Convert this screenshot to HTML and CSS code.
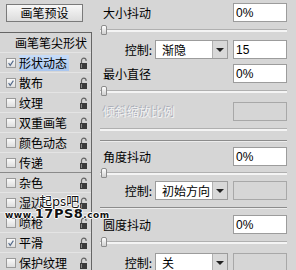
FILE: index.html
```html
<!DOCTYPE html>
<html>
<head>
<meta charset="utf-8">
<link rel="stylesheet" href="styles.css">
</head>
<body>
<div class="app">
  <div class="left">
    <div class="preset-btn">画笔预设</div>
    <div class="list">
      <div class="row header">画笔笔尖形状</div>
      <div class="row"><span class="cb on"><svg width="10" height="10" viewBox="0 0 10 10"><path d="M2 5l2 3 4-6" fill="none" stroke="#556a8a" stroke-width="1.4"/></svg></span><span class="name sel">形状动态</span><span class="lock"><svg width="10" height="12" viewBox="0 0 10 12"><path d="M2.5 6V3.5a2.3 2.3 0 0 1 4.6 0V4" fill="none" stroke="#666" stroke-width="1.2"/><rect x="1" y="6" width="7" height="6" fill="#3c3c3c"/><rect x="2" y="7" width="1" height="4" fill="#888"/></svg></span></div>
      <div class="row"><span class="cb on"><svg width="10" height="10" viewBox="0 0 10 10"><path d="M2 5l2 3 4-6" fill="none" stroke="#556a8a" stroke-width="1.4"/></svg></span><span class="name">散布</span><span class="lock"><svg width="10" height="12" viewBox="0 0 10 12"><path d="M2.5 6V3.5a2.3 2.3 0 0 1 4.6 0V4" fill="none" stroke="#666" stroke-width="1.2"/><rect x="1" y="6" width="7" height="6" fill="#3c3c3c"/><rect x="2" y="7" width="1" height="4" fill="#888"/></svg></span></div>
      <div class="row"><span class="cb"></span><span class="name">纹理</span><span class="lock"><svg width="10" height="12" viewBox="0 0 10 12"><path d="M2.5 6V3.5a2.3 2.3 0 0 1 4.6 0V4" fill="none" stroke="#666" stroke-width="1.2"/><rect x="1" y="6" width="7" height="6" fill="#3c3c3c"/><rect x="2" y="7" width="1" height="4" fill="#888"/></svg></span></div>
      <div class="row"><span class="cb"></span><span class="name">双重画笔</span><span class="lock"><svg width="10" height="12" viewBox="0 0 10 12"><path d="M2.5 6V3.5a2.3 2.3 0 0 1 4.6 0V4" fill="none" stroke="#666" stroke-width="1.2"/><rect x="1" y="6" width="7" height="6" fill="#3c3c3c"/><rect x="2" y="7" width="1" height="4" fill="#888"/></svg></span></div>
      <div class="row"><span class="cb"></span><span class="name">颜色动态</span><span class="lock"><svg width="10" height="12" viewBox="0 0 10 12"><path d="M2.5 6V3.5a2.3 2.3 0 0 1 4.6 0V4" fill="none" stroke="#666" stroke-width="1.2"/><rect x="1" y="6" width="7" height="6" fill="#3c3c3c"/><rect x="2" y="7" width="1" height="4" fill="#888"/></svg></span></div>
      <div class="row group-end"><span class="cb"></span><span class="name">传递</span><span class="lock"><svg width="10" height="12" viewBox="0 0 10 12"><path d="M2.5 6V3.5a2.3 2.3 0 0 1 4.6 0V4" fill="none" stroke="#666" stroke-width="1.2"/><rect x="1" y="6" width="7" height="6" fill="#3c3c3c"/><rect x="2" y="7" width="1" height="4" fill="#888"/></svg></span></div>
      <div class="row"><span class="cb"></span><span class="name">杂色</span><span class="lock"><svg width="10" height="12" viewBox="0 0 10 12"><path d="M2.5 6V3.5a2.3 2.3 0 0 1 4.6 0V4" fill="none" stroke="#666" stroke-width="1.2"/><rect x="1" y="6" width="7" height="6" fill="#3c3c3c"/><rect x="2" y="7" width="1" height="4" fill="#888"/></svg></span></div>
      <div class="row"><span class="cb"></span><span class="name">湿边</span><span class="lock"><svg width="10" height="12" viewBox="0 0 10 12"><path d="M2.5 6V3.5a2.3 2.3 0 0 1 4.6 0V4" fill="none" stroke="#666" stroke-width="1.2"/><rect x="1" y="6" width="7" height="6" fill="#3c3c3c"/><rect x="2" y="7" width="1" height="4" fill="#888"/></svg></span></div>
      <div class="row"><span class="cb"></span><span class="name">喷枪</span><span class="lock"><svg width="10" height="12" viewBox="0 0 10 12"><path d="M2.5 6V3.5a2.3 2.3 0 0 1 4.6 0V4" fill="none" stroke="#666" stroke-width="1.2"/><rect x="1" y="6" width="7" height="6" fill="#3c3c3c"/><rect x="2" y="7" width="1" height="4" fill="#888"/></svg></span></div>
      <div class="row"><span class="cb on"><svg width="10" height="10" viewBox="0 0 10 10"><path d="M2 5l2 3 4-6" fill="none" stroke="#556a8a" stroke-width="1.4"/></svg></span><span class="name">平滑</span><span class="lock"><svg width="10" height="12" viewBox="0 0 10 12"><path d="M2.5 6V3.5a2.3 2.3 0 0 1 4.6 0V4" fill="none" stroke="#666" stroke-width="1.2"/><rect x="1" y="6" width="7" height="6" fill="#3c3c3c"/><rect x="2" y="7" width="1" height="4" fill="#888"/></svg></span></div>
      <div class="row"><span class="cb"></span><span class="name">保护纹理</span><span class="lock"><svg width="10" height="12" viewBox="0 0 10 12"><path d="M2.5 6V3.5a2.3 2.3 0 0 1 4.6 0V4" fill="none" stroke="#666" stroke-width="1.2"/><rect x="1" y="6" width="7" height="6" fill="#3c3c3c"/><rect x="2" y="7" width="1" height="4" fill="#888"/></svg></span></div>
    </div>
    <div class="watermark"><div class="wm-cn">起ps吧</div><div class="wm-url"><span class="wm-s">www.</span><span class="wm-b">17PS8</span><span class="wm-s">.com</span></div></div>
  </div>
  <div class="right">
    <div class="field first"><span class="lbl">大小抖动</span><span class="inp">0%</span></div>
    <div class="slider s18"><div class="track"></div><div class="thumb"></div></div>
    <div class="control"><span class="clbl">控制:</span><span class="select"><span class="sel-text">渐隐</span><span class="arrow"></span></span><span class="inp">15</span></div>
    <div class="field gap5"><span class="lbl">最小直径</span><span class="inp">0%</span></div>
    <div class="slider s19"><div class="track"></div><div class="thumb"></div></div>
    <div class="field"><span class="lbl disabled">倾斜缩放比例</span><span class="inp off"></span></div>
    <div class="slider s19"><div class="track"></div></div>
    <div class="sep"></div>
    <div class="field gap5"><span class="lbl">角度抖动</span><span class="inp">0%</span></div>
    <div class="slider s15"><div class="track"></div><div class="thumb"></div></div>
    <div class="control"><span class="clbl">控制:</span><span class="select"><span class="sel-text">初始方向</span><span class="arrow"></span></span><span class="inp off"></span></div>
    <div class="sep gap7"></div>
    <div class="field gap6"><span class="lbl">圆度抖动</span><span class="inp">0%</span></div>
    <div class="slider s19"><div class="track"></div><div class="thumb"></div></div>
    <div class="control"><span class="clbl">控制:</span><span class="select"><span class="sel-text">关</span><span class="arrow"></span></span><span class="inp off"></span></div>
  </div>
</div>
</body>
</html>
```
FILE: styles.css
```css
html, body {
  margin: 0;
  padding: 0;
}
body {
  width: 296px;
  height: 270px;
  overflow: hidden;
  background: #d6d6d6;
  font-family: "Noto Sans CJK SC", "Liberation Sans", sans-serif;
  font-size: 12px;
  color: #000;
}
.app {
  display: flex;
  height: 270px;
}
.left {
  width: 100px;
  position: relative;
  padding-top: 4px;
  box-sizing: border-box;
}
.preset-btn {
  margin-left: 6px;
  width: 77px;
  height: 18px;
  box-sizing: border-box;
  border: 1px solid #7a7a7a;
  background: linear-gradient(#f8f8f8, #dcdcdc);
  display: flex;
  align-items: center;
  justify-content: center;
  font-size: 12px;
  line-height: 1;
}
.list {
  margin-top: 10px;
  width: 92px;
  border-top: 1px solid #666;
  border-right: 1px solid #666;
  box-sizing: border-box;
}
.row {
  height: 20px;
  display: flex;
  align-items: center;
  box-sizing: border-box;
  border-bottom: 1px solid #e4e4e4;
  position: relative;
}
.row.header {
  justify-content: flex-end;
  padding-right: 4px;
  font-size: 12px;
}
.row.group-end {
  border-bottom: 1px solid #8a8a8a;
}
.cb {
  width: 10px;
  height: 10px;
  margin-left: 6px;
  box-sizing: border-box;
  border: 1px solid #9a9a9a;
  background: linear-gradient(#fafafa, #dedede);
  display: flex;
  align-items: center;
  justify-content: center;
}
.cb svg {
  display: block;
}
.name {
  margin-left: 3px;
  padding: 0 2px 0 0;
  font-size: 12px;
  line-height: 16px;
}
.name.sel {
  background: linear-gradient(#c7dcf8, #a9c6ef);
}
.lock {
  position: absolute;
  left: 79px;
  top: 4px;
}
.lock svg {
  display: block;
}
.watermark {
  position: absolute;
  left: 5px;
  top: 194px;
  width: 96px;
  color: #111;
  pointer-events: none;
  text-shadow: 1px 0 0 #fff, -1px 0 0 #fff, 0 1px 0 #fff, 0 -1px 0 #fff;
}
.wm-cn {
  margin-left: 34px;
  font-size: 13px;
  line-height: 14px;
}
.wm-url {
  display: flex;
  align-items: baseline;
  font-family: "DejaVu Sans", sans-serif;
  font-weight: bold;
  line-height: 12px;
  white-space: nowrap;
}
.wm-s {
  font-size: 9px;
  letter-spacing: 0.5px;
}
.wm-b {
  font-size: 13px;
  letter-spacing: 0.5px;
}
.right {
  width: 196px;
  padding-right: 9px;
  box-sizing: border-box;
  display: flex;
  flex-direction: column;
}
.field, .control {
  height: 19px;
  display: flex;
  align-items: center;
  flex-shrink: 0;
}
.field {
  justify-content: space-between;
}
.field.first {
  margin-top: 3px;
}
.gap5 { margin-top: 5px; }
.gap6 { margin-top: 6px; }
.gap7 { margin-top: 7px; }
.lbl {
  margin-left: 3px;
  font-size: 12px;
}
.lbl.disabled {
  color: #f2f2f2;
  text-shadow: -1px -1px 0 #a9adb8;
}
.inp {
  width: 54px;
  height: 19px;
  box-sizing: border-box;
  border: 1px solid #9c9c9c;
  background: #fff;
  font-family: "Liberation Sans", sans-serif;
  font-size: 12px;
  display: flex;
  align-items: center;
  padding-left: 2px;
}
.inp.off {
  background: #d6d6d6;
  border-color: #a8a8a8;
}
.slider {
  position: relative;
  flex-shrink: 0;
}
.s15 { height: 15px; }
.s18 { height: 18px; }
.s19 { height: 19px; }
.track {
  position: absolute;
  left: 0;
  right: 0;
  top: 7px;
  height: 3px;
  box-sizing: border-box;
  border-top: 1px solid #b0b0b0;
  background: #f4f4f4;
}
.s15 .track { top: 6px; }
.thumb {
  position: absolute;
  left: 1px;
  top: 3px;
  width: 6px;
  height: 10px;
  box-sizing: border-box;
  border: 1px solid #8c8c8c;
  border-radius: 2px 2px 1px 1px;
  background: linear-gradient(#ffffff, #d0d0d0);
}
.s15 .thumb { top: 2px; }
.control {
  justify-content: flex-end;
}
.clbl {
  font-size: 12px;
  margin-right: 3px;
}
.select {
  width: 73px;
  height: 19px;
  box-sizing: border-box;
  border: 1px solid #9c9c9c;
  background: #fff;
  display: flex;
  align-items: center;
  margin-right: 5px;
}
.sel-text {
  flex: 1;
  padding-left: 6px;
  font-size: 12px;
}
.arrow {
  width: 14px;
  height: 17px;
  border-left: 1px solid #b0b0b0;
  background: #d8d8d8;
  position: relative;
}
.arrow::after {
  content: "";
  position: absolute;
  left: 3px;
  top: 7px;
  border-left: 4px solid transparent;
  border-right: 4px solid transparent;
  border-top: 4px solid #222;
}
.sep {
  height: 1px;
  background: #8c8c8c;
  border-bottom: 1px solid #ececec;
  flex-shrink: 0;
}
```
